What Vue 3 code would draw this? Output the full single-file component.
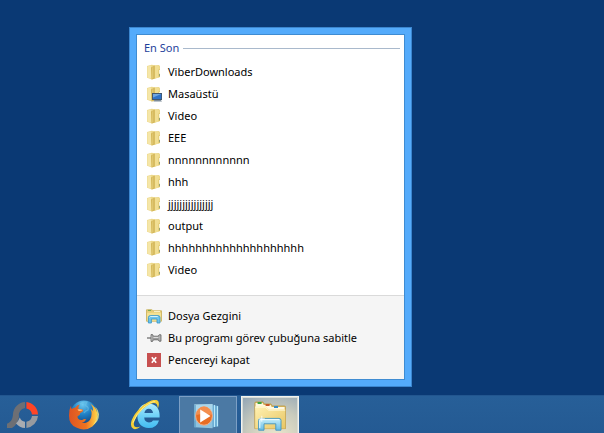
<template>
  <div class="desktop">
    <main class="workspace">
      <section class="jump-list">
        <div class="panel">
          <div class="group-title">
            <h2>En Son</h2>
            <span class="rule"></span>
          </div>
          <ul class="entries recent">
            <li v-for="(item, i) in recent" :key="i">
              <button type="button" class="entry">
                <svg class="icon" viewBox="0 0 16 16" aria-hidden="true">
                  <path d="M1 2 5.6.8 9 1.2l4-.2 1 1.2V13l-4.4 1.4-3.6 1.2L1 13.8z" fill="#ecd88b" />
                  <path d="M1.4 2.4 5 1.4v13L1.4 13.4z" fill="#f5e6a8" />
                  <path d="M5 3.4 8.8 1.6v12.8L5.6 15.6z" fill="#d3b658" />
                  <path d="M6 3.6 7.4 3v11l-1.4.8z" fill="#dfc670" />
                  <path d="M9 2h3.8v11.2L9 14.4z" fill="#f1de92" />
                  <path d="M12.6 5.6H14v7.2l-1.4.6z" fill="#d8bd62" />
                  <path d="M13 6h.9v3.8H13z" fill="#fdfbe8" />
                  <path d="M13 10h.9v2H13z" fill="#8fa37c" />
                  <template v-if="item.desktop">
                    <path d="M6 7h10v7H6z" fill="#41566e" />
                    <path d="M7 8h8.2v5H7z" fill="#2f72c8" />
                    <path d="M7 8h8.2L7 11.6z" fill="#6fa6e2" />
                    <path d="M8.4 14h6.4l1.2 1.6H7.4z" fill="#7d8b98" />
                  </template>
                </svg>
                <span>{{ item.name }}</span>
              </button>
            </li>
          </ul>
          <ul class="entries tasks">
            <li v-for="task in tasks" :key="task.id">
              <button type="button" class="entry">
                <svg v-if="task.id === 'explorer'" class="icon" viewBox="0 0 16 16" aria-hidden="true">
                  <path d="M.5 1.8h5.6l1 1h8.4v10.4H.5z" fill="#e8cf79" stroke="#c9ae55" stroke-width=".8" />
                  <path d="M2 2.4h3" stroke="#73a64f" />
                  <path d="M8 3.6h6" stroke="#fbf3cd" />
                  <path d="M1 4.8h14v8H1z" fill="#f3e193" />
                  <path d="M2.4 15V9.6q0-2 2-2h7.6q2 0 2 2V15h-3v-4H5.4v4z" fill="#6cc3ec" stroke="#3494c8" stroke-width=".8" />
                  <path d="M3.6 9.4q.2-.9 1-.9h7.2" fill="none" stroke="#d2f1fc" />
                </svg>
                <svg v-else-if="task.id === 'pin'" class="icon" viewBox="0 0 16 16" aria-hidden="true">
                  <path d="M1 8h4.5" stroke="#666" stroke-width="1.2" />
                  <path d="M5 4.6h1.6l.8 1.6h4.8l.9-1.4H15v6.4h-1.9L12.2 9.8H7.4l-.8 1.6H5z" fill="#9b9b9b" stroke="#626262" stroke-width=".8" />
                  <path d="M7.4 7.4h5" stroke="#e4e4e4" />
                  <path d="M5.8 5.4v5.2M13.8 5.4v5" stroke="#c6c6c6" stroke-width=".7" />
                </svg>
                <svg v-else class="icon" viewBox="0 0 16 16" aria-hidden="true">
                  <path d="M1 1h14v14H1z" fill="#c75050" />
                  <path d="M5.8 5.2 10.2 10.8M10.2 5.2 5.8 10.8" stroke="#fff" stroke-width="1.6" />
                </svg>
                <span>{{ task.name }}</span>
              </button>
            </li>
          </ul>
        </div>
      </section>
    </main>

    <nav class="taskbar">
      <button type="button" class="app" aria-label="PhotoScape">
        <svg viewBox="0 0 32 32" aria-hidden="true">
          <path d="M19 2A13 13 0 0 0 7 14c-.3 5-2 8.2-6 9.8V28h5c4-2 6-6 7-11.4A7 7 0 0 1 19 8z" fill="#6d6f74" />
          <path d="M20.4 2A13 13 0 0 1 32 14.4h-6A7 7 0 0 0 20.4 8.4z" fill="#ff4526" />
          <path d="M32 16A13 13 0 0 1 20.4 28v-6.2A7 7 0 0 0 26 16z" fill="#979a9f" />
          <path d="M19 28a13 13 0 0 1-9-4.6q2.6-2.8 3.8-6A7 7 0 0 0 19 21.8z" fill="#a9acb1" />
        </svg>
      </button>
      <button type="button" class="app" aria-label="Firefox">
        <svg viewBox="0 0 32 32" aria-hidden="true">
          <defs>
            <radialGradient id="globe" cx=".45" cy=".15" r=".85">
              <stop offset="0" stop-color="#6cc8f0" />
              <stop offset=".45" stop-color="#1f7fc4" />
              <stop offset="1" stop-color="#0f2f68" />
            </radialGradient>
            <linearGradient id="fox" x1="0" y1="0" x2="1" y2="0">
              <stop offset="0" stop-color="#dd5423" />
              <stop offset=".6" stop-color="#ee7420" />
              <stop offset="1" stop-color="#ffd84a" />
            </linearGradient>
          </defs>
          <circle cx="16" cy="14" r="13.6" fill="url(#globe)" />
          <path d="M12 4q3-2.6 7-2-2 2.5-1 4 3 1 2 4-3 1-4 3" fill="none" stroke="#73c8ec" stroke-width="1.2" opacity=".5" />
          <path d="M3 5.4q0 2.6.8 3.6 1.5-1.2 3.6-1.4 1.6-2.4 4.4-3-1.8 2-1.1 4.4 2.2.3 4.4.8.5 1.5-1.6 2.5l-1.5 1q.5 2-1.3 2.1-1.8.4-1 2.6 1.4 2.6 4.6 1.9 2.2-1.5 4-.3-1.4 2.6-4.6 3 5.6 1.4 8.6-3.4 2.4-4.8.4-10.2 1.9 1 2.4 2.4.2-4.8-3-8 6 3.4 7.3 9.8.6 8.6-5 13.2-7.2 5.2-15.6 1.4Q.8 24.6 1 15.4 1.1 9 3 5.4z" fill="url(#fox)" />
          <path d="M27.2 6.6q5 10.4-2.4 18.4 6.4-3.4 6.2-11-1-4.6-3.8-7.4z" fill="#ffec80" opacity=".75" />
          <path d="M9.4 9.4q2.6-.5 5.3.7-1.7 1.4-4 .8z" fill="#ffc078" />
        </svg>
      </button>
      <button type="button" class="app" aria-label="Internet Explorer">
        <svg viewBox="0 0 32 32" aria-hidden="true">
          <defs>
            <linearGradient id="letter" gradientUnits="userSpaceOnUse" x1="0" y1="3" x2="0" y2="28">
              <stop offset="0" stop-color="#b2ecfd" />
              <stop offset=".5" stop-color="#72d2f8" />
              <stop offset="1" stop-color="#42bdf2" />
            </linearGradient>
          </defs>
          <path fill-rule="evenodd" d="M18.6 3.4C25.4 3.4 29.6 8.4 29.6 15v2.6H14.2q.3 4.6 4.8 4.8 3 0 4-2h6Q26.8 28 18.6 28 7.8 27.6 7.4 16 7.8 4 18.6 3.4zM14.4 13h8.6q-.4-4-4.2-4.2-3.8.2-4.4 4.2z" fill="url(#letter)" />
          <path d="M3 28.6Q-2 24.8 5 14 12.6 3.6 22 .3q7.6-2 6.8 4.8-.3 2-1.1 3.7.2-6.2-4.6-5.8Q16 4.6 8.8 13.6 1.8 23.3 4.6 26.4q2 1.5 6 .1-4.6 3.8-7.6 2.1z" fill="#f6ce35" />
          <path d="M3 22.6Q5.6 14.6 13.6 7.2q8-6 11.6-5.6" fill="none" stroke="#fff2a0" stroke-width=".8" />
        </svg>
      </button>
      <button type="button" class="app running" aria-label="Windows Media Player">
        <svg viewBox="0 0 32 32" aria-hidden="true">
          <path d="M19 5 26.4 6v20.4L19 27.6z" fill="#5a9fcb" />
          <path d="m21.8 4.8 1.4.4v21.6l-1.4.4zM24.8 5.8l1.2.4v20l-1.2.4z" fill="#b9e8fa" />
          <path d="M2.2 4.6 20.6 4v24.2l-18.4-1z" fill="#8fc3df" />
          <path d="M2.2 4.6 20.6 4v10L2.2 21z" fill="#bce2f2" opacity=".6" />
          <path d="M3 5v22" stroke="#579bc6" stroke-width="1.2" />
          <ellipse cx="12" cy="16" rx="8.4" ry="9.2" fill="#e76d24" stroke="#f3b08a" stroke-width="1" />
          <path d="M4.4 15a7.6 8.4 0 0 1 15.2 0q-8-2-15.2 0z" fill="#f48e4e" />
          <path d="m8.2 9.4 10.4 6.6-10.4 6.6z" fill="#fff" />
        </svg>
      </button>
      <button type="button" class="app active" aria-label="Dosya Gezgini">
        <svg viewBox="0 0 32 32" aria-hidden="true">
          <defs>
            <linearGradient id="folder" x1="0" y1="0" x2="1" y2="1">
              <stop offset="0" stop-color="#fff1b2" />
              <stop offset="1" stop-color="#e8c663" />
            </linearGradient>
            <linearGradient id="stand" x1="0" y1="0" x2="0" y2="1">
              <stop offset="0" stop-color="#c7effa" />
              <stop offset="1" stop-color="#68bce4" />
            </linearGradient>
          </defs>
          <path d="M.8 28.6V3.2q0-1.3 1.2-1.3h7l1.2 2H17l1 2h12.2q1.4 0 1.4 1.4v21.3z" fill="#dcb95b" stroke="#b99542" stroke-width=".7" />
          <path d="M1.6 3h7l1 2h7l1 2h13v3H1.6z" fill="#fff8df" />
          <path d="M3.6 3h4" stroke="#3aa33c" stroke-width="2" />
          <path d="M11.6 5h4" stroke="#c65a28" stroke-width="2" />
          <path d="M20 7h4" stroke="#378bc4" stroke-width="2" />
          <path d="M1.2 6.6h10.4l3.4 3h16.2v19h-30z" fill="url(#folder)" />
          <path d="M1.2 7.2h10l3.4 3h16.6" fill="none" stroke="#fffbe0" stroke-width=".8" />
          <path d="M4.6 30.2V20.4q0-2 2-2H25q2 0 2 2v9.8h-5.2v-6.4H10v6.4z" fill="url(#stand)" stroke="#4295bf" stroke-width=".9" />
          <path d="M5.8 28v-7.2q0-1.2 1.2-1.2h18" fill="none" stroke="#f2fdff" stroke-width="1" />
          <path d="M7.8 15.8v6M4.8 18.8h6" stroke="#fff" stroke-width=".8" />
        </svg>
      </button>
    </nav>
  </div>
</template>

<script setup>
const recent = [
  { name: 'ViberDownloads' },
  { name: 'Masaüstü', desktop: true },
  { name: 'Video' },
  { name: 'EEE' },
  { name: 'nnnnnnnnnnnn' },
  { name: 'hhh' },
  { name: 'jjjjjjjjjjjjjjjj' },
  { name: 'output' },
  { name: 'hhhhhhhhhhhhhhhhhhhh' },
  { name: 'Video' }
]

const tasks = [
  { id: 'explorer', name: 'Dosya Gezgini' },
  { id: 'pin', name: 'Bu programı görev çubuğuna sabitle' },
  { id: 'close', name: 'Pencereyi kapat' }
]
</script>

<style>
body {
  margin: 0;
  background: #0a3974;
}
</style>

<style scoped>
.desktop {
  display: flex;
  flex-direction: column;
  min-height: 100vh;
  background: #0a3974;
  font-family: 'Noto Sans', 'Open Sans', sans-serif;
  font-size: 11px;
  color: #000;
}

.workspace {
  flex: 1;
  padding: 27px 16px 8px 129px;
}

.jump-list {
  box-sizing: border-box;
  max-width: 283px;
  padding: 6px;
  border: 1px solid #3b86cf;
  background: #54abfb;
}

.panel {
  border: 1px solid #3f8cd2;
  background: #fff;
}

.group-title {
  display: flex;
  align-items: center;
  gap: 4px;
  height: 20px;
  padding: 3px 4px 3px 7px;
}

.group-title h2 {
  margin: 0;
  font-size: 11px;
  font-weight: 400;
  line-height: 20px;
  color: #1e3f9b;
}

.rule {
  flex: 1;
  height: 1px;
  background: #a9b9cc;
}

.entries {
  margin: 0;
  padding: 0;
  list-style: none;
}

.recent {
  padding-bottom: 14px;
}

.tasks {
  padding: 9px 0 8px;
  border-top: 1px solid #dadada;
  background: #f5f5f5;
}

.entry {
  display: flex;
  align-items: center;
  gap: 6px;
  width: 100%;
  height: 22px;
  padding: 0 9px;
  border: 0;
  background: none;
  font: inherit;
  line-height: 22px;
  color: inherit;
  text-align: left;
  white-space: nowrap;
}

.entry:hover {
  background: #e5f1fb;
}

.icon {
  flex: none;
  width: 16px;
  height: 16px;
}

.taskbar {
  display: flex;
  gap: 4px;
  box-sizing: border-box;
  height: 38px;
  overflow: hidden;
  border-top: 1px solid #22568f;
  background: linear-gradient(180deg, #275f98, #245a93);
}

.app {
  flex: none;
  display: flex;
  align-items: center;
  justify-content: center;
  box-sizing: border-box;
  width: 58px;
  height: 40px;
  padding: 0;
  border: 1px solid transparent;
  background: none;
}

.app:first-child {
  margin-left: -7px;
}

.app svg {
  width: 32px;
  height: 32px;
}

.running {
  border-color: #7c9fc5;
  background: #4b79a4;
}

.active {
  border: 1px solid #f2f3ef;
  box-shadow: inset 0 0 0 1px #d9dcd6;
  background: radial-gradient(circle at 60% 110%, #f0e8cc 0, #c9cbbd 55%, #8fa3b5 100%);
}
</style>
